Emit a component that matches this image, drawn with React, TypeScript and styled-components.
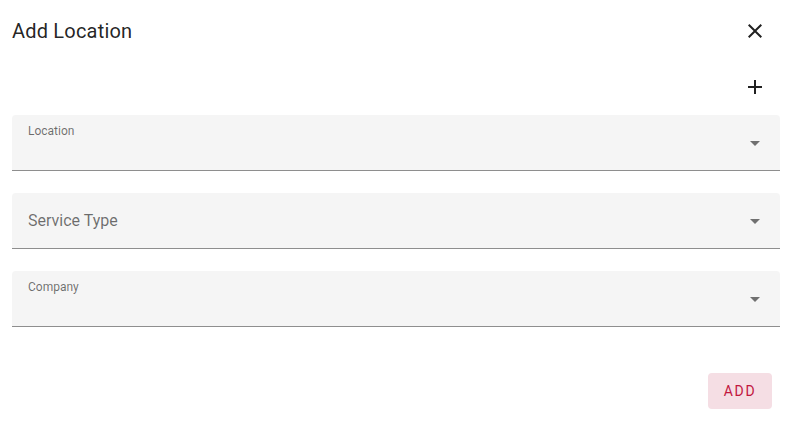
import styled, { createGlobalStyle } from "styled-components";

const GlobalStyle = createGlobalStyle`
    body {
        margin: 0;
        background: #ffffff;
        font-family: Roboto, "Liberation Sans", sans-serif;
    }
`;

const StyledDialog = styled.div`
    width: 793px;
    height: 428px;
    box-sizing: border-box;
    padding: 0 13px 0 12px;
    display: flex;
    flex-flow: column nowrap;
    background: #ffffff;
`;

const StyledHeader = styled.div`
    height: 62px;
    display: flex;
    align-items: center;
    justify-content: space-between;

    h2 {
        margin: 0;
        font-size: 20px;
        font-weight: 400;
        color: rgba(0, 0, 0, 0.87);
        letter-spacing: 0.01em;
    }
`;

const StyledActionRow = styled.div`
    display: flex;
    justify-content: flex-end;
    padding: 13px 0 16px 0;
`;

const StyledIconButton = styled.button`
    width: 24px;
    height: 24px;
    margin-right: 13px;
    padding: 0;
    border: none;
    background: none;
    color: rgba(0, 0, 0, 0.87);
    display: flex;
    align-items: center;
    justify-content: center;
    cursor: pointer;
`;

const StyledFields = styled.div`
    display: flex;
    flex-flow: column nowrap;
    gap: 22px;
`;

const StyledField = styled.div<{ $filled: boolean }>`
    position: relative;
    height: 56px;
    box-sizing: border-box;
    background: #f5f5f5;
    border-radius: 4px 4px 0 0;
    border-bottom: 1px solid rgba(0, 0, 0, 0.42);
    padding: ${({ $filled }) => ($filled ? "9px 48px 0 16px" : "0 48px 0 16px")};
    display: flex;
    align-items: ${({ $filled }) => ($filled ? "flex-start" : "center")};
`;

const StyledLabel = styled.span<{ $small: boolean }>`
    font-size: ${({ $small }) => ($small ? "12px" : "16px")};
    line-height: ${({ $small }) => ($small ? "15px" : "20px")};
    color: rgba(0, 0, 0, 0.56);
`;

const StyledArrow = styled.svg`
    position: absolute;
    right: 13px;
    top: 50%;
    margin-top: -12px;
    width: 24px;
    height: 24px;
    fill: rgba(0, 0, 0, 0.54);
`;

const StyledFooter = styled.div`
    display: flex;
    justify-content: flex-end;
    padding: 46px 8px 0 0;
`;

const StyledAddButton = styled.button`
    width: 64px;
    height: 36px;
    border: none;
    border-radius: 4px;
    background: #f5dee4;
    color: #c2173f;
    font-family: Roboto, "Liberation Sans", sans-serif;
    font-size: 14px;
    font-weight: 400;
    letter-spacing: 0.12em;
    text-transform: uppercase;
    cursor: pointer;
`;

const fields = [
    { label: "Location", small: true },
    { label: "Service Type", small: false },
    { label: "Company", small: true },
];

function SelectField({ label, small }: { label: string; small: boolean }) {
    return (
        <StyledField $filled={small}>
            <StyledLabel $small={small}>{label}</StyledLabel>
            <StyledArrow viewBox="0 0 24 24">
                <path d="M7 10l5 5 5-5z" />
            </StyledArrow>
        </StyledField>
    );
}

function App() {
    return (
        <>
            <GlobalStyle />
            <StyledDialog>
                <StyledHeader>
                    <h2>Add Location</h2>
                    <StyledIconButton aria-label="close">
                        <svg width="24" height="24" viewBox="0 0 24 24" fill="currentColor">
                            <path d="M19 6.41 17.59 5 12 10.59 6.41 5 5 6.41 10.59 12 5 17.59 6.41 19 12 13.41 17.59 19 19 17.59 13.41 12z" />
                        </svg>
                    </StyledIconButton>
                </StyledHeader>
                <StyledActionRow>
                    <StyledIconButton aria-label="add">
                        <svg width="24" height="24" viewBox="0 0 24 24" fill="currentColor">
                            <path d="M19 13h-6v6h-2v-6H5v-2h6V5h2v6h6v2z" />
                        </svg>
                    </StyledIconButton>
                </StyledActionRow>
                <StyledFields>
                    {fields.map((f) => (
                        <SelectField key={f.label} label={f.label} small={f.small} />
                    ))}
                </StyledFields>
                <StyledFooter>
                    <StyledAddButton>Add</StyledAddButton>
                </StyledFooter>
            </StyledDialog>
        </>
    );
}

export default App;
